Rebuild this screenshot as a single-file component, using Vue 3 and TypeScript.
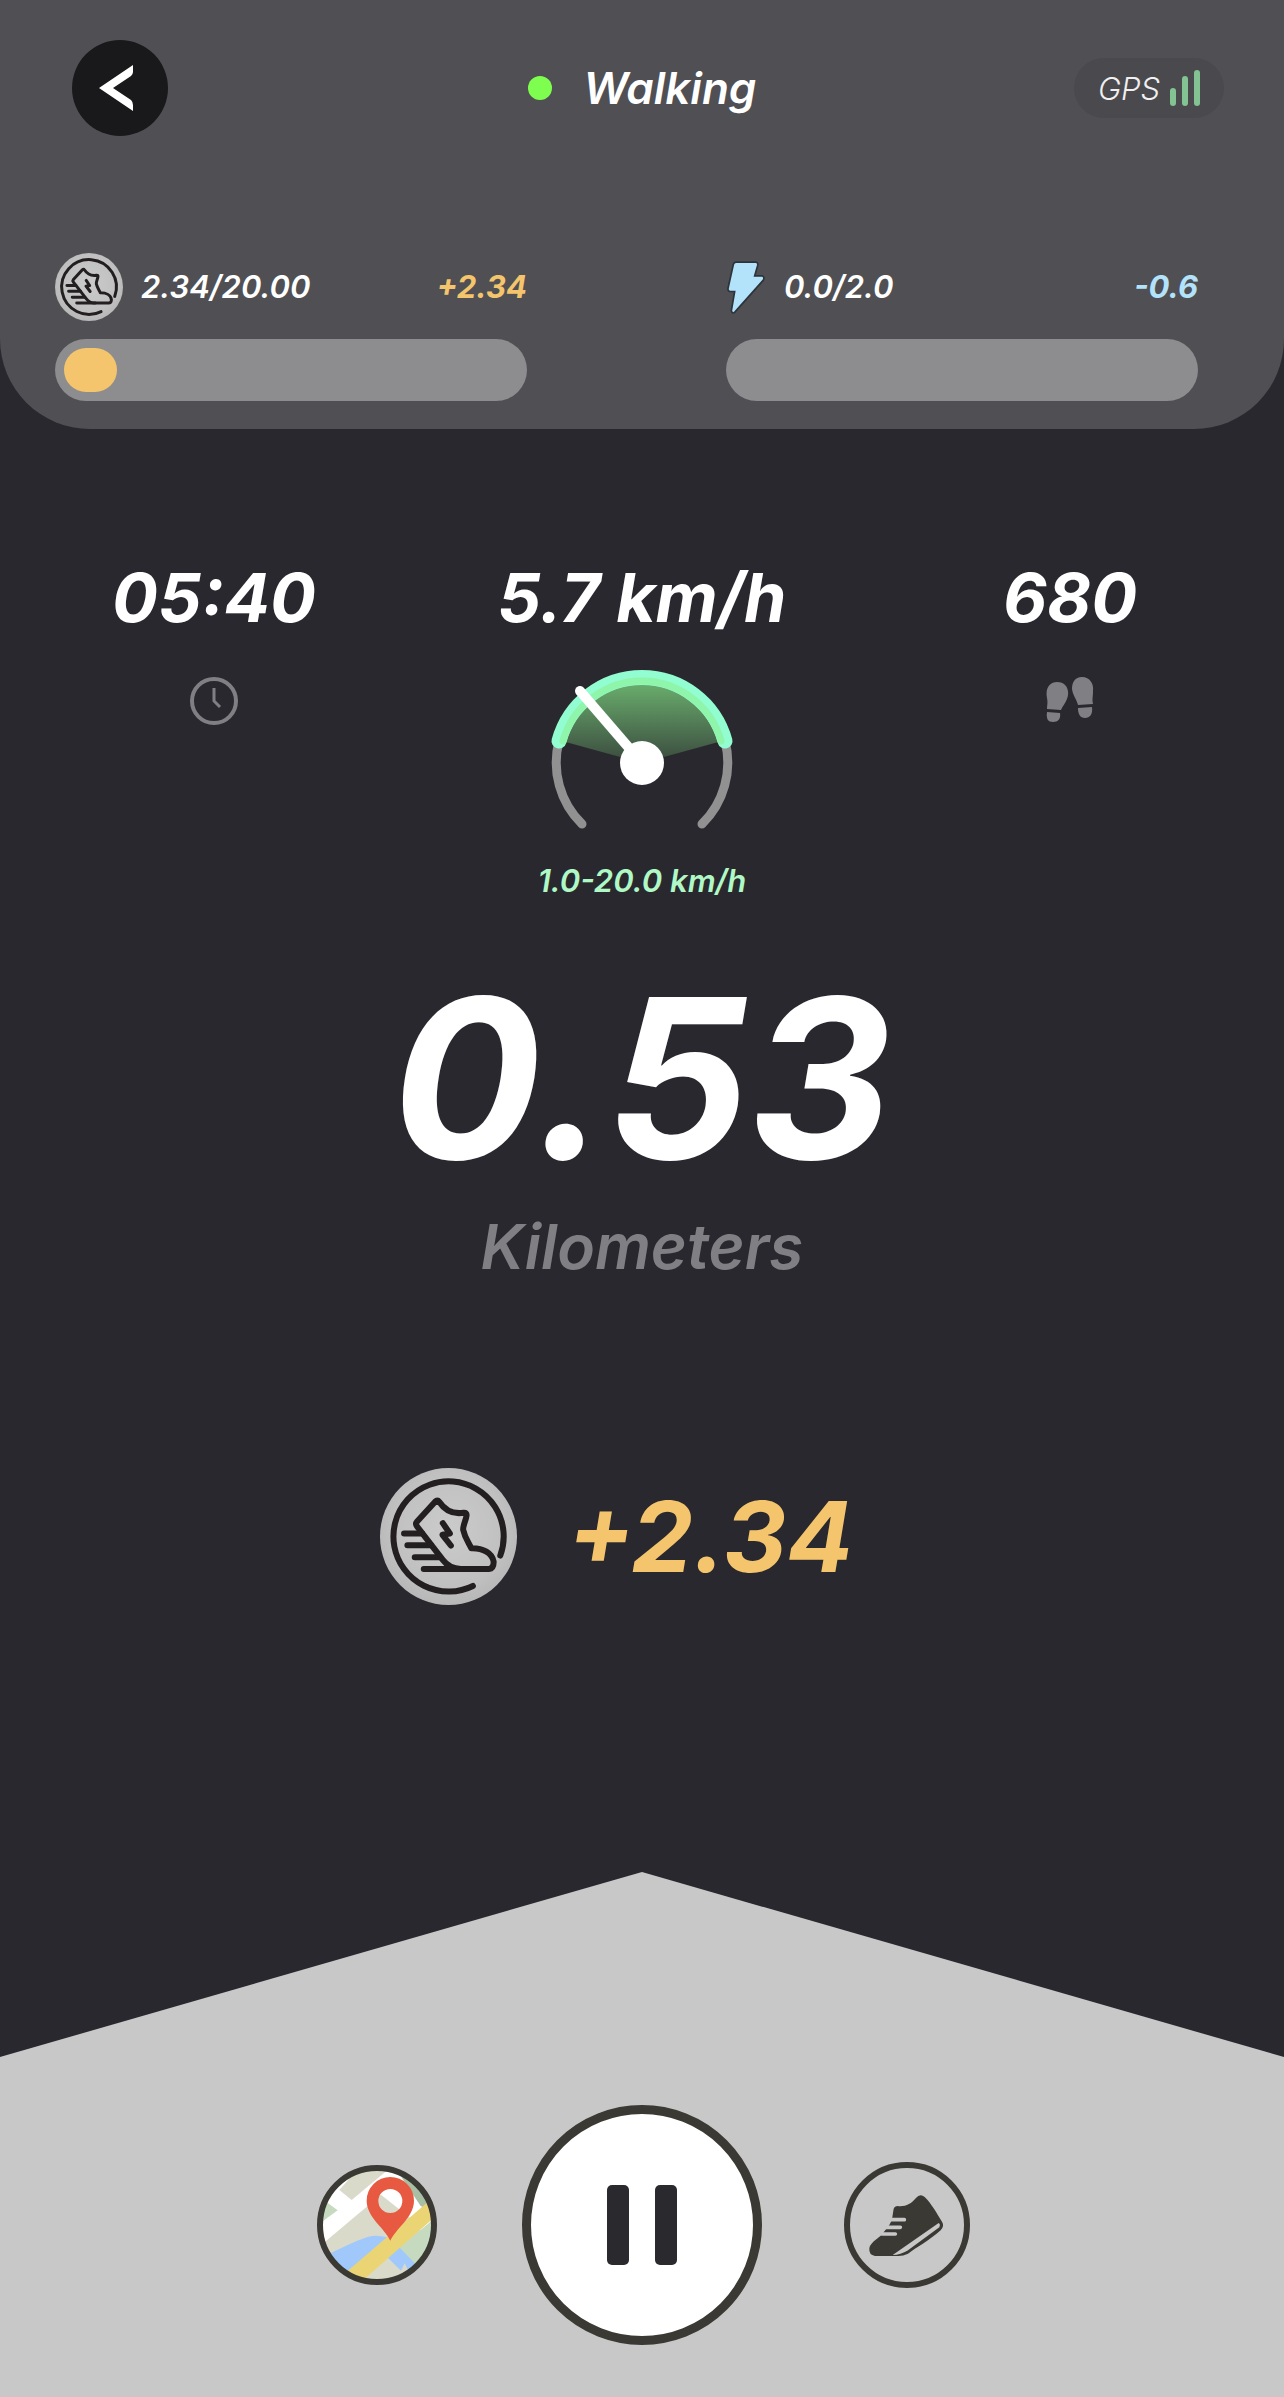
<script setup lang="ts">
interface Meter {
  id: string
  label: string
  value: number
  max: number
  digits: number
  delta: string
  color: string
}

const meters: Meter[] = [
  { id: 'coin', label: 'Earnings', value: 2.34, max: 20, digits: 2, delta: '+2.34', color: '#f4c56c' },
  { id: 'energy', label: 'Energy', value: 0, max: 2, digits: 1, delta: '-0.6', color: '#b3e2fb' },
]

const percent = (m: Meter) => (m.value / m.max) * 100
</script>

<template>
  <main class="screen">
    <svg class="defs" width="0" height="0" aria-hidden="true">
      <defs>
        <radialGradient id="metal" cx="50%" cy="45%" r="60%">
          <stop offset="0" stop-color="#cbcbcb" />
          <stop offset="0.7" stop-color="#c0c0c0" />
          <stop offset="1" stop-color="#b4b4b4" />
        </radialGradient>
        <symbol id="coin" viewBox="30 24 410 410">
          <circle cx="235" cy="229" r="205" fill="url(#metal)" />
          <g fill="none" stroke="#231f20" stroke-width="18" stroke-linecap="round" stroke-linejoin="round">
            <path d="M390 286A165 165 0 1 0 308 377" />
            <path
              d="M207 125Q202 118 195 125L141 184Q135 191 141 199L218 299Q238 326 272 326H356Q371 325 370 304C366 279 339 263 303 264C297 249 285 237 279 209C277 199 288 178 289 166Q290 157 280 158C248 163 225 152 207 125Z"
            />
            <path d="M102 220H156M112 255H183M134 291H210M161 326H272" />
            <path d="M218 189L239 220L217 224L242 256" />
          </g>
        </symbol>
      </defs>
    </svg>

    <header class="top">
      <div class="bar">
        <button class="back" type="button" aria-label="Back">
          <svg viewBox="0 0 96 96"><path d="M61 25V32Q61 34 59 36L41 48L59 60Q61 62 61 65V71L27 48Z" fill="#fff" /></svg>
        </button>
        <h1 class="title"><span class="dot"></span>Walking</h1>
        <div class="gps">
          <span>GPS</span>
          <svg viewBox="0 0 30 36" width="30" height="36" fill="#83c293" aria-hidden="true">
            <rect x="0" y="18" width="6" height="18" rx="3" />
            <rect x="12" y="6" width="6" height="30" rx="3" />
            <rect x="24" y="0" width="6" height="36" rx="3" />
          </svg>
        </div>
      </div>

      <div class="meters">
        <section v-for="m in meters" :key="m.id" class="meter">
          <div class="meter-head">
            <svg v-if="m.id === 'coin'" class="coin-small" aria-hidden="true"><use href="#coin" /></svg>
            <svg v-else class="bolt" viewBox="20 55 120 170" aria-hidden="true">
              <path
                d="M50 64H109Q117 65 115 74L106 105H128Q137 109 132 118L47 213Q39 221 36 210L46 152H31Q25 150 26 143L42 71Q44 64 50 64Z"
                fill="#b3e2fb"
                stroke="#2c333a"
                stroke-width="5"
              />
            </svg>
            <span>{{ m.value.toFixed(m.digits) }}/{{ m.max.toFixed(m.digits) }}</span>
            <strong class="delta" :style="{ color: m.color }">{{ m.delta }}</strong>
          </div>
          <div class="track" role="progressbar" :aria-label="m.label" :aria-valuenow="m.value" :aria-valuemax="m.max">
            <div v-if="m.value > 0" class="fill" :style="{ width: percent(m) + '%', background: m.color }"></div>
          </div>
        </section>
      </div>
    </header>

    <div class="stats">
      <div class="stat">
        <span class="stat-value">05:40</span>
        <svg class="stat-icon" viewBox="0 0 48 48" fill="none" stroke="#807f84" aria-hidden="true">
          <circle cx="24" cy="24" r="22" stroke-width="4" />
          <path d="M24 11V24L30 30" stroke-width="3" />
        </svg>
      </div>
      <div class="stat">
        <span class="stat-value">5.7 km/h</span>
        <svg class="gauge" viewBox="0 0 192 168" fill="none" stroke-linecap="round" aria-hidden="true">
          <defs>
            <linearGradient id="wedge" gradientUnits="userSpaceOnUse" x1="0" y1="14" x2="0" y2="96">
              <stop offset="0" stop-color="#6bb06e" />
              <stop offset="1" stop-color="#3a4a3e" />
            </linearGradient>
          </defs>
          <path d="M96 96L16 74A83 83 0 0 1 176 74Z" fill="url(#wedge)" />
          <path d="M36 157A86 86 0 0 1 13 74M156 157A86 86 0 0 0 179 74" stroke="#919191" stroke-width="9" />
          <path d="M13 74A86 86 0 0 1 179 74" stroke="#91fdd0" stroke-width="15" />
          <path d="M17 74A82 82 0 0 1 175 74" stroke="#8ef5aa" stroke-width="7" />
          <path d="M34 24L96 96" stroke="#fff" stroke-width="10" />
          <circle cx="96" cy="96" r="22" fill="#fff" />
        </svg>
        <span class="range">1.0-20.0 km/h</span>
      </div>
      <div class="stat">
        <span class="stat-value">680</span>
        <svg class="stat-icon" viewBox="0 0 48 48" fill="#807f84" aria-hidden="true">
          <path d="M1 32C1 28 2 26 1 21C-1 11 4 5 11 5C19 5 23 11 22 18C21 25 17 28 15 33Z" />
          <path d="M1 35L14 36C15 42 12 45 7 45C2 45 0 42 1 35Z" />
          <path d="M32 28C31 23 27 19 26 12C26 5 29 0 36 0C44 0 48 7 47 14C47 20 46 22 47 27Z" />
          <path d="M32 31L46 30C47 37 44 41 39 41C34 41 32 37 32 31Z" />
        </svg>
      </div>
    </div>

    <div class="distance">
      <span class="distance-value">0.53</span>
      <span class="distance-unit">Kilometers</span>
    </div>

    <div class="reward">
      <svg class="coin-large" aria-hidden="true"><use href="#coin" /></svg>
      <span>+2.34</span>
    </div>

    <footer class="panel">
      <div class="slot">
        <button class="round map" type="button" aria-label="Map">
          <svg viewBox="51 75 360 360">
            <defs>
              <clipPath id="disc"><circle cx="231" cy="255" r="170" /></clipPath>
            </defs>
            <g clip-path="url(#disc)">
              <rect x="51" y="75" width="360" height="360" fill="#fff" />
              <path d="M118 150L180 80H275L155 180Z" fill="#dadacb" />
              <path d="M82 188L113 211L60 250Z" fill="#c5dabe" />
              <path d="M60 318L243 164L330 233L360 260V435H60Z" fill="#dadacb" />
              <path d="M300 105L400 160V215L362 198Z" fill="#a9bfa4" />
              <path d="M298 322L411 230V400H365Z" fill="#c5dabe" />
              <path d="M80 345Q175 298 206 290Q230 284 262 292L150 405H80Z" fill="#a0c8fb" />
              <path d="M262 352L298 322L350 376L325 392L314 370L303 392Z" fill="#a0c8fb" />
              <path d="M135 400L400 172V235L190 420Z" fill="#ebd473" />
              <path
                fill="#e75a41"
                fill-rule="evenodd"
                d="M271 302C255 265 200 232 200 182A71 71 0 0 1 342 182C342 232 287 265 271 302ZM271 147A36 36 0 1 0 271 219A36 36 0 1 0 271 147Z"
              />
            </g>
            <circle cx="231" cy="255" r="171" fill="none" stroke="#3a3933" stroke-width="18" />
          </svg>
        </button>
      </div>
      <button class="round pause" type="button" aria-label="Pause"><i></i><i></i></button>
      <div class="slot">
        <button class="round shoes" type="button" aria-label="Sneakers">
          <svg viewBox="72 66 378 378">
            <circle cx="261" cy="255" r="180" fill="none" stroke="#3a3933" stroke-width="18" />
            <path
              fill="#3a3933"
              d="M220 212Q221 199 232 198C256 201 273 192 288 174Q300 159 314 171C334 190 350 220 366 245Q374 258 362 271C330 300 290 322 264 341Q250 348 235 348H165Q146 345 148 325C150 311 166 301 184 286L208 255Q216 243 217 232Z"
            />
            <path d="M186 282H226M194 262H241M206 239H253" stroke="#c8c8c8" stroke-width="11" stroke-linecap="round" />
            <path d="M218 345L356 249Q362 252 358 262L264 331Q242 345 218 345Z" fill="#c8c8c8" />
          </svg>
        </button>
      </div>
    </footer>
  </main>
</template>

<style>
body {
  background: #29282e;
}
</style>

<style scoped>
.screen {
  display: flex;
  flex-direction: column;
  min-height: 100vh;
  background: #29282e;
  color: #fff;
  font-family: Inter, 'Liberation Sans', sans-serif;
  font-style: italic;
  font-weight: 600;
}

.defs {
  position: absolute;
}

svg {
  display: block;
}

button {
  padding: 0;
  border: 0;
  cursor: pointer;
}

.top {
  padding-bottom: 28px;
  border-radius: 0 0 90px 90px;
  background: #504f54;
}

.bar {
  display: grid;
  grid-template-columns: 1fr auto 1fr;
  align-items: center;
  padding: 40px 60px 0;
}

.back {
  width: 96px;
  height: 96px;
  margin-left: 12px;
  border-radius: 50%;
  background: #19191b;
}

.title {
  display: flex;
  align-items: center;
  gap: 32px;
  margin: 0;
  font-size: 44px;
  font-weight: 600;
  line-height: 56px;
}

.dot {
  width: 24px;
  height: 24px;
  border-radius: 50%;
  background: #7eff4f;
}

.gps {
  display: flex;
  align-items: center;
  justify-content: center;
  gap: 10px;
  justify-self: end;
  width: 150px;
  height: 60px;
  border-radius: 30px;
  background: #4a494d;
  color: #f0f0f0;
  font-size: 31px;
  font-weight: 300;
}

.meters {
  display: grid;
  grid-template-columns: 1fr 1fr;
  gap: 199px;
  padding: 117px 86px 0 55px;
}

.meter-head {
  display: flex;
  align-items: center;
  gap: 18px;
  height: 68px;
  margin-bottom: 18px;
  font-size: 31px;
  line-height: 40px;
}

.delta {
  margin-left: auto;
  font-weight: 700;
}

.coin-small {
  width: 68px;
  height: 68px;
}

.bolt {
  width: 40px;
  height: 57px;
}

.track {
  box-sizing: border-box;
  height: 62px;
  padding: 9px;
  border-radius: 31px;
  background: #8d8d8f;
}

.fill {
  height: 44px;
  border-radius: 22px;
}

.stats {
  display: grid;
  grid-template-columns: repeat(3, 1fr);
  padding-top: 128px;
}

.stat {
  display: flex;
  flex-direction: column;
  align-items: center;
}

.stat-value {
  font-size: 68px;
  font-weight: 700;
  line-height: 80px;
}

.stat-icon {
  width: 48px;
  height: 48px;
  margin-top: 40px;
}

.gauge {
  width: 192px;
  height: 168px;
  margin: 30px 0 28px;
}

.range {
  color: #b0f8c5;
  font-size: 31px;
  line-height: 36px;
}

.distance {
  display: flex;
  flex-direction: column;
  align-items: center;
  gap: 17px;
  padding-top: 69px;
}

.distance-value {
  font-size: 222px;
  font-weight: 700;
  line-height: 222px;
}

.distance-unit {
  color: #807f84;
  font-size: 62px;
  line-height: 80px;
}

.reward {
  display: flex;
  align-items: center;
  justify-content: center;
  gap: 50px;
  padding: 181px 51px 100px 0;
  color: #f4c56c;
  font-size: 98px;
  font-weight: 700;
  line-height: 120px;
}

.coin-large {
  width: 137px;
  height: 137px;
}

.panel {
  display: flex;
  align-items: center;
  justify-content: center;
  gap: 82px;
  margin-top: auto;
  padding: 233px 0 52px;
  background: #c8c8c8;
  clip-path: polygon(0 185px, 50% 0, 100% 185px, 100% 100%, 0 100%);
}

.slot {
  display: flex;
  justify-content: center;
  width: 126px;
}

.round {
  border-radius: 50%;
  background: none;
}

.map {
  width: 120px;
  height: 120px;
}

.shoes {
  width: 126px;
  height: 126px;
}

.pause {
  display: flex;
  align-items: center;
  justify-content: center;
  gap: 26px;
  box-sizing: border-box;
  width: 240px;
  height: 240px;
  border: 9px solid #3a3933;
  background: #fff;
}

.pause i {
  width: 22px;
  height: 80px;
  border-radius: 5px;
  background: #29292e;
}
</style>
